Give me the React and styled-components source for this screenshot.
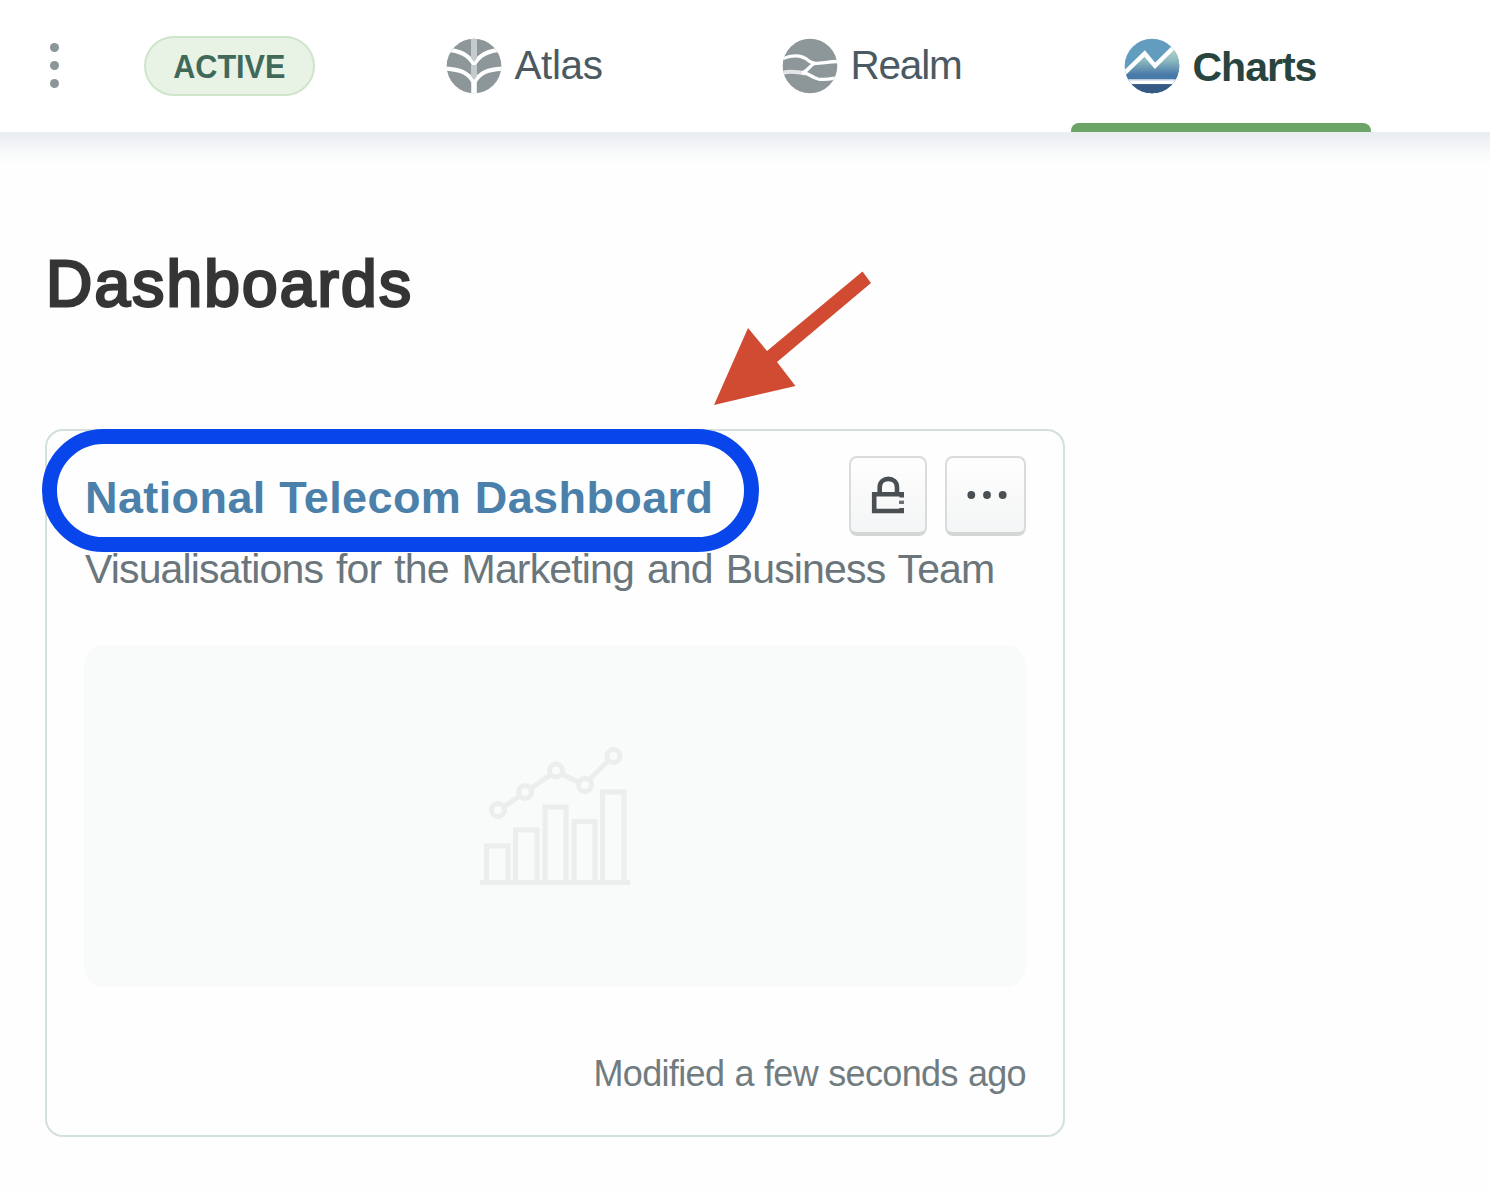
import React from "react";
import styled, { createGlobalStyle } from "styled-components";

const GlobalStyle = createGlobalStyle`
  *, *::before, *::after { box-sizing: border-box; }
  body {
    margin: 0;
    background: #fefefe;
    font-family: "Liberation Sans", Arial, sans-serif;
  }
  h1, h2, p { margin: 0; }
`;

const Page = styled.div`
  position: relative;
  width: 1490px;
  height: 1194px;
  overflow: hidden;
`;

const Header = styled.header`
  display: flex;
  height: 132px;
  background: #fff;
`;

const HeaderShadow = styled.div`
  height: 32px;
  background: linear-gradient(#e9edf0, #eef1f4 25%, #f9fafb 65%, #fefefe);
`;

const Menu = styled.div`
  display: flex;
  flex-direction: column;
  align-items: center;
  gap: 9px;
  width: 12px;
  margin: 43px 84px 0 48px;
`;

const Dot = styled.span`
  width: 9px;
  height: 9px;
  border-radius: 50%;
  background: #8b9699;
`;

const Badge = styled.span`
  display: flex;
  justify-content: center;
  width: 171px;
  height: 60px;
  margin-top: 36px;
  border: 2px solid #cfe5cb;
  border-radius: 30px;
  background: #e8f3e6;
  color: #41695a;
  font-size: 34px;
  font-weight: 700;
  line-height: 56px;
`;

const BadgeLabel = styled.span`
  transform: scaleX(0.9);
`;

const Nav = styled.nav`
  display: flex;
  margin-left: 78px;
`;

const Tab = styled.a`
  display: flex;
  width: ${(p) => p.$width}px;
  padding: 38px 0 0 53px;
  color: ${(p) => (p.$active ? "#28443e" : "#4b5a62")};
  font-size: ${(p) => (p.$active ? 41 : 40.5)}px;
  font-weight: ${(p) => (p.$active ? 700 : 400)};
  position: relative;

  &::after {
    content: ${(p) => (p.$active ? '""' : "none")};
    position: absolute;
    left: 0;
    right: 0;
    bottom: 0;
    height: 9px;
    border-radius: 8px 8px 0 0;
    background: #6ba466;
  }
`;

const TabLabel = styled.span`
  margin: ${(p) => p.$top}px 0 0 12.5px;
  line-height: 52px;
  letter-spacing: ${(p) => p.$spacing}px;
`;

const Logo = styled.svg`
  width: 56px;
  height: 56px;
  flex: none;
`;

const Main = styled.main`
  padding: 82px 0 0 46px;
`;

const Heading = styled.h1`
  height: 76px;
  margin-bottom: 107px;
  color: #353535;
  font-size: 64px;
  font-weight: 400;
  line-height: 76px;
  letter-spacing: 2.2px;
  -webkit-text-stroke: 2.8px #353535;
`;

const Card = styled.article`
  width: 1020px;
  height: 708px;
  margin-left: -1px;
  padding: 25px 37px 0;
  border: 2px solid #d3e0dc;
  border-radius: 18px;
  background: #fefefe;
`;

const CardTop = styled.div`
  display: flex;
  justify-content: space-between;
  height: 80px;
`;

const TitleWrap = styled.div`
  position: relative;
`;

const CardTitle = styled.h2`
  padding: 15px 0 0 1px;
  color: #4a80aa;
  font-size: 45px;
  font-weight: 700;
  line-height: 54px;
  letter-spacing: 0.4px;
  word-spacing: 0.6px;
  white-space: nowrap;
`;

const Highlight = styled.div`
  position: absolute;
  z-index: 2;
  left: -42px;
  top: -27px;
  width: 717px;
  height: 123px;
  border: 15px solid #0846ec;
  border-radius: 62px;
`;

const Actions = styled.div`
  display: flex;
  gap: 18px;
`;

const IconButton = styled.button`
  display: flex;
  align-items: center;
  justify-content: center;
  width: ${(p) => p.$width}px;
  height: 80px;
  padding: 0;
  border: 2px solid #d9dcdb;
  border-bottom: 4px solid #d3d6d5;
  border-radius: 8px;
  background: linear-gradient(#fefefe, #f4f5f6);
`;

const Description = styled.p`
  height: 48px;
  margin: 9px 0 0 1px;
  color: #6a767b;
  font-size: 41px;
  line-height: 48px;
  letter-spacing: -0.85px;
  word-spacing: 2.4px;
  white-space: nowrap;
`;

const Preview = styled.div`
  display: flex;
  justify-content: center;
  height: 342px;
  margin-top: 52px;
  padding-top: 98px;
  border-radius: 20px;
  background: #f9fbfa;
`;

const Modified = styled.p`
  margin-top: 65px;
  color: #717c80;
  font-size: 36px;
  line-height: 44px;
  letter-spacing: -0.65px;
  word-spacing: 0.8px;
  text-align: right;
  white-space: nowrap;
`;

const Arrow = styled.svg`
  position: absolute;
  left: 710px;
  top: 265px;
`;

const AtlasLogo = () => (
  <Logo viewBox="0 0 56 56">
    <clipPath id="atlas"><circle cx="28" cy="28" r="27.3" /></clipPath>
    <g clipPath="url(#atlas)">
      <rect width="56" height="56" fill="#8d9799" />
      <g fill="none" stroke="#fff">
        <path d="M-1 11.500C14 12 23 17 28 26.500C33 17 42 12 57 11.500" strokeWidth="4.2" />
        <path d="M-2 30.500C14 31 23 35 28 45C33 35 42 31 58 30.500" strokeWidth="4.2" />
        <path d="M28 42V56" strokeWidth="5.500" />
      </g>
      <path d="M25 0h6v20L28 24l-3-4zM25 27h6v11L28 42l-3-4z" fill="#c5cbcd" />
    </g>
  </Logo>
);

const RealmLogo = () => (
  <Logo viewBox="0 0 56 56">
    <clipPath id="realm"><circle cx="28" cy="28" r="27.3" /></clipPath>
    <g clipPath="url(#realm)">
      <rect width="56" height="56" fill="#8d9799" />
      <path d="M0 35C8 32.500 17 34 24 35.500" fill="none" stroke="#e3e6e7" strokeWidth="4" />
      <g fill="none" stroke="#fff" strokeWidth="3.300">
        <path d="M-1 21.500C10 16.500 20 17 27 23C33 28 42 23.500 57 23.500" />
        <path d="M20 34.500C27 35 29 39 36 41C42 42.500 48 41 57 39.500" />
        <path d="M33 25.500C28 26.500 27 32 21 34.500" />
      </g>
    </g>
  </Logo>
);

const ChartsLogo = () => (
  <Logo viewBox="0 0 56 56">
    <defs>
      <clipPath id="charts"><circle cx="28" cy="28" r="27.3" /></clipPath>
      <linearGradient id="hill" x1="0" y1="12" x2="0" y2="43" gradientUnits="userSpaceOnUse">
        <stop offset="0" stopColor="#b4d5ca" />
        <stop offset=".35" stopColor="#8bb8bd" />
        <stop offset=".8" stopColor="#4879a9" />
        <stop offset="1" stopColor="#4879a9" />
      </linearGradient>
    </defs>
    <g clipPath="url(#charts)">
      <rect width="56" height="56" fill="#629dbf" />
      <path d="M0 38L20.500 17L30.500 29L50 10L60 6V60H0Z" fill="url(#hill)" />
      <path d="M-2 37.500L20.700 15.500L31 27.800L53 6" fill="none" stroke="#fff" strokeWidth="4.400" />
      <rect y="41" width="56" height="2" fill="#b9cfe1" />
      <rect y="42.500" width="56" height="3.700" fill="#fff" />
      <rect y="46.200" width="56" height="10" fill="#365a84" />
    </g>
  </Logo>
);

const LockIcon = () => (
  <svg width="36" height="40" viewBox="0 0 36 40" fill="none" stroke="#494f52" strokeWidth="4.600">
    <path d="M9.700 18V12.500C9.700 1 27 1 27 12.500V18" />
    <path d="M34 19.200H4.200V36H34" />
    <path d="M31.700 19V22.500M31.700 33V38" />
    <path d="M29 27.300H34" strokeWidth="3.400" stroke="#6b7174" />
  </svg>
);

const MoreIcon = () => (
  <svg width="42" height="10" viewBox="0 0 42 10" fill="#494f52">
    <circle cx="6.300" cy="5" r="3.900" />
    <circle cx="22" cy="5" r="3.900" />
    <circle cx="37.700" cy="5" r="3.900" />
  </svg>
);

const ChartPlaceholder = () => (
  <svg width="150" height="144" viewBox="0 0 150 144" fill="none" stroke="#eaeeec" strokeWidth="5">
    <path d="M0 139.500H150" />
    <path d="M6.500 138V103H28V138M35.500 138V87H57V138M65 138V64H86V138M94 138V78.500H115V138M122.500 138V49H144V138" />
    <path d="M23 64L40 53M50 46L70 32M80 30L100 40M109 37L128 18" />
    <g>
      <circle cx="18" cy="67" r="6.500" />
      <circle cx="45" cy="49" r="6.500" />
      <circle cx="76" cy="27.500" r="6.500" />
      <circle cx="105" cy="42" r="6.500" />
      <circle cx="133.500" cy="13" r="6.500" />
    </g>
  </svg>
);

export default function App() {
  return (
    <Page>
      <GlobalStyle />
      <Header>
        <Menu><Dot /><Dot /><Dot /></Menu>
        <Badge><BadgeLabel>ACTIVE</BadgeLabel></Badge>
        <Nav>
          <Tab $width={336}>
            <AtlasLogo />
            <TabLabel $top={1} $spacing={-0.4}>Atlas</TabLabel>
          </Tab>
          <Tab $width={342}>
            <RealmLogo />
            <TabLabel $top={1} $spacing={-1.2}>Realm</TabLabel>
          </Tab>
          <Tab $width={300} $active>
            <ChartsLogo />
            <TabLabel $top={3} $spacing={-1}>Charts</TabLabel>
          </Tab>
        </Nav>
      </Header>
      <HeaderShadow />
      <Main>
        <Heading>Dashboards</Heading>
        <Card>
          <CardTop>
            <TitleWrap>
              <CardTitle>National Telecom Dashboard</CardTitle>
              <Highlight />
            </TitleWrap>
            <Actions>
              <IconButton $width={78} aria-label="Lock"><LockIcon /></IconButton>
              <IconButton $width={81} aria-label="More"><MoreIcon /></IconButton>
            </Actions>
          </CardTop>
          <Description>Visualisations for the Marketing and Business Team</Description>
          <Preview><ChartPlaceholder /></Preview>
          <Modified>Modified a few seconds ago</Modified>
        </Card>
      </Main>
      <Arrow width="170" height="145" viewBox="710 265 170 145">
        <path d="M714 405L748 328L767 351L862.500 271.500L871 283L777 362L795.500 386Z" fill="#d14b33" />
      </Arrow>
    </Page>
  );
}
